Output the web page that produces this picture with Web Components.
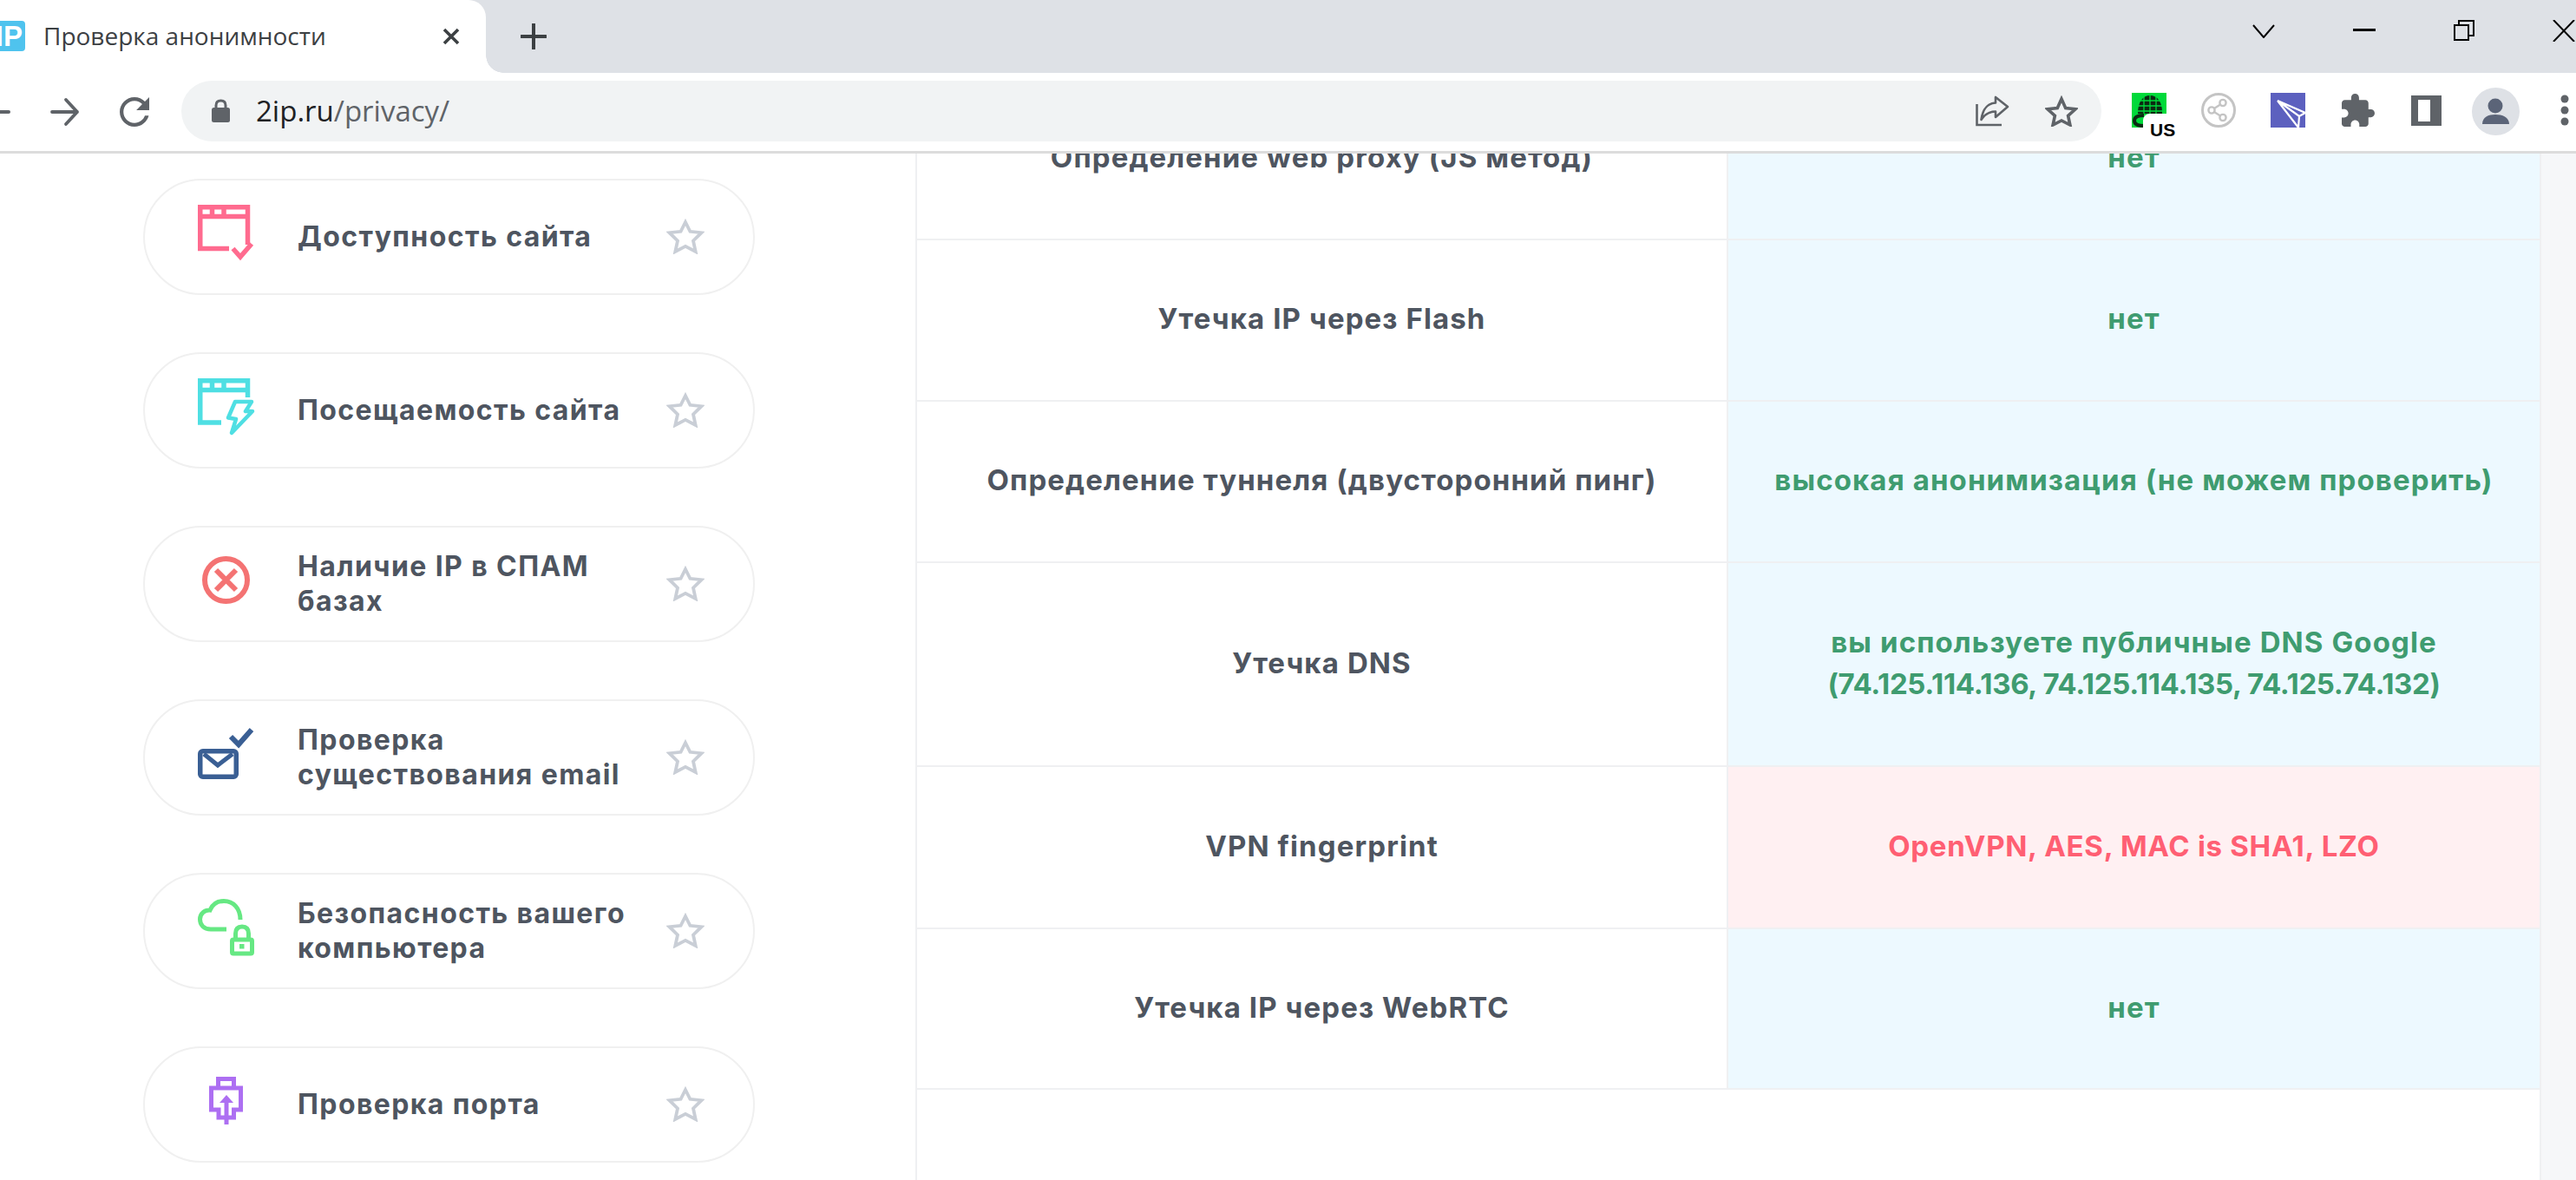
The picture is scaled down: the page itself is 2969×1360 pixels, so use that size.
<!DOCTYPE html>
<html lang="ru"><head><meta charset="utf-8"><title>Проверка анонимности</title>
<style>
html,body{margin:0;padding:0;background:#fff;overflow:hidden}
body{width:2969px;height:1360px;display:flex;flex-direction:column;font-family:"Open Sans","Liberation Sans",sans-serif}
</style></head><body>
<browser-tabstrip></browser-tabstrip>
<browser-toolbar></browser-toolbar>
<site-page>
  <site-menu slot="menu">
    <menu-card icon="avail">Доступность сайта</menu-card>
    <menu-card icon="traffic">Посещаемость сайта</menu-card>
    <menu-card icon="spam">Наличие IP в СПАМ базах</menu-card>
    <menu-card icon="mail">Проверка существования email</menu-card>
    <menu-card icon="secure">Безопасность вашего компьютера</menu-card>
    <menu-card icon="port">Проверка порта</menu-card>
  </site-menu>
  <check-table slot="table">
    <check-row h="186" name="Определение web proxy (JS метод)">нет</check-row>
    <check-row h="186" name="Утечка IP через Flash">нет</check-row>
    <check-row h="186" name="Определение туннеля (двусторонний пинг)">высокая анонимизация (не можем проверить)</check-row>
    <check-row h="235" name="Утечка DNS">вы используете публичные DNS Google<br><span style="letter-spacing:-.35px">(74.125.114.136, 74.125.114.135, 74.125.74.132)</span></check-row>
    <check-row h="187" bad name="VPN fingerprint"><span style="letter-spacing:.7px">OpenVPN, AES, MAC is SHA1, LZO</span></check-row>
    <check-row h="185" name="Утечка IP через WebRTC">нет</check-row>
  </check-table>
</site-page>
<script>
const def=(n,html,extra)=>customElements.define(n,class extends HTMLElement{
  connectedCallback(){ if(this.shadowRoot)return; const s=this.attachShadow({mode:'open'}); s.innerHTML=typeof html==='function'?html(this):html; }
});
def('browser-tabstrip',`<style>
:host{display:flex;height:84px;background:#dee1e6;flex:none;align-items:stretch;font-family:"Open Sans","Liberation Sans",sans-serif}
.tab{position:relative;width:560px;background:#fff;border-top-right-radius:20px;display:flex;align-items:center;box-sizing:border-box}
.tab::after{content:"";position:absolute;right:-20px;bottom:0;width:20px;height:20px;background:radial-gradient(circle at 100% 0,transparent 19.5px,#fff 20px)}
.fav{width:29px;height:35px;margin-top:-1px;background:#4fc3ee;border-radius:0 4px 4px 0;overflow:hidden;display:flex;justify-content:flex-end;align-items:center;color:#fff;font:700 33px/35px "Liberation Sans",sans-serif;flex:none}
.fav span{display:block;white-space:nowrap;margin-right:3px}
.title{margin-left:21px;font-size:28px;color:#3c4043;white-space:nowrap;margin-top:-2px}
.close{position:absolute;left:510px;top:32px}
.plus{margin-left:40px;align-self:flex-start;margin-top:27px}
.win{margin-left:auto;display:flex;gap:90px;margin-right:1px;align-self:flex-start;margin-top:23px;align-items:flex-start}
svg{display:block;flex:none}
</style>
<div class="tab"><div class="fav"><span>IP</span></div><div class="title">Проверка анонимности</div>
<svg class="close" width="20" height="20" viewBox="0 0 20 20"><path d="M2 2L18 18M18 2L2 18" stroke="#3c4043" stroke-width="3.6"/></svg></div>
<svg class="plus" width="30" height="30" viewBox="0 0 30 30"><path d="M15 1V29M1 15H29" stroke="#3c4043" stroke-width="4" stroke-linecap="round"/></svg>
<div class="win">
<svg style="margin-top:5px" width="26" height="16" viewBox="0 0 26 16"><path d="M1 1L13 15L25 1" fill="none" stroke="#000" stroke-width="2"/></svg>
<svg style="margin-top:10px" width="26" height="3" viewBox="0 0 26 3"><rect width="26" height="3"/></svg>
<svg width="24" height="24" viewBox="0 0 24 24" fill="none" stroke="#000" stroke-width="2"><rect x="1" y="6" width="16" height="17"/><path d="M6 6V1H23V18H17"/></svg>
<svg width="26" height="25" viewBox="0 0 26 25"><path d="M1 0L25 25M25 0L1 25" stroke="#000" stroke-width="2"/></svg>
</div>`);
def('browser-toolbar',`<style>
:host{display:flex;height:93px;box-sizing:border-box;border-bottom:3px solid #dcdcdc;background:#fff;flex:none;align-items:center;position:relative;z-index:2;font-family:"Open Sans","Liberation Sans",sans-serif}
svg{display:block;flex:none}
.addr{margin-left:37px;width:2213px;height:70px;margin-top:-3px;background:#f1f3f4;border-radius:35px;display:flex;align-items:center;box-sizing:border-box;padding:0 27px 0 35px}
.url{margin-left:30px;font-size:33px;color:#5f6368;white-space:nowrap}
.url b{font-weight:400;color:#202124}
.ext{position:relative;width:40px;height:40px;background:#00d93a;margin-left:35px;flex:none;margin-top:-4px}
.ext svg{position:absolute;left:0;top:0}
.badge{position:absolute;left:13px;top:24px;width:40px;height:30px;background:#fff;border-radius:8px 0 0 0;color:#000;font:700 21px/24px "Liberation Sans",sans-serif;padding:7px 0 0 8px;box-sizing:border-box}
</style>
<svg width="12" height="6" viewBox="0 0 12 6"><path d="M0 3H10" stroke="#5f6368" stroke-width="4" stroke-linecap="round"/></svg>
<svg style="margin-left:46px" width="34" height="34" viewBox="0 0 34 34"><path d="M2 17H31M18 3L31 17L18 31" fill="none" stroke="#5f6368" stroke-width="3.8" stroke-linecap="round" stroke-linejoin="round"/></svg>
<svg style="margin-left:46px" width="34" height="34" viewBox="4 4 16 16"><path fill="#5f6368" d="M17.65 6.35C16.2 4.9 14.21 4 12 4c-4.42 0-7.99 3.58-7.99 8s3.57 8 7.99 8c3.73 0 6.84-2.55 7.73-6h-2.08c-.82 2.33-3.04 4-5.65 4-3.31 0-6-2.69-6-6s2.69-6 6-6c1.66 0 3.14.69 4.22 1.78L13 11h7V4l-2.35 2.35z"/></svg>
<div class="addr">
<svg width="21" height="27" viewBox="0 0 21 27"><path d="M5 11V7.500C5 4 7 2 10.500 2S16 4 16 7.500V11" fill="none" stroke="#5f6368" stroke-width="3"/><rect y="10" width="21" height="17" rx="2.500" fill="#5f6368"/></svg>
<div class="url"><b>2ip.ru</b>/privacy/</div>
<svg style="margin-left:auto" width="39" height="36" viewBox="0 0 39 36" fill="none" stroke="#5f6368" stroke-width="2.600"><path d="M1.500 10V34H30"/><path d="M37 13L23 2V8.500C12 9.500 8 17 6.500 28C11 21 16 18.500 23 18.500V25Z" stroke-linejoin="round"/></svg>
<svg style="margin-left:41px" width="38" height="36" viewBox="0 0 38 36"><path d="M19 4L23.700 14.500L35 15.800L26.600 23.500L28.900 34L19 29L9.100 34L11.400 23.500L3 15.800L14.300 14.500Z" fill="none" stroke="#5f6368" stroke-width="3.600"/></svg>
</div>
<div class="ext">
<svg width="40" height="40" viewBox="0 0 40 40"><path d="M7 24C7 10 13 3 21 3S35 10 35 22V24Z" fill="#0b2a12"/><path d="M14 3V24M21 1V24M28 3V24M7 9H36M7 15H36M7 21H36" stroke="#00d93a" stroke-width="1.300"/><path d="M14 26C6 26 3 28 3 32S6 38 14 38" fill="none" stroke="#0b2a12" stroke-width="4"/></svg>
<div class="badge">US</div>
</div>
<svg style="margin-left:40px;margin-top:-4px" width="40" height="40" viewBox="0 0 40 40" fill="none" stroke="#c4c4c4"><circle cx="20" cy="20" r="18.500" stroke-width="3"/><circle cx="25" cy="11.500" r="3.600" stroke-width="2.400"/><circle cx="12" cy="20" r="3.600" stroke-width="2.400"/><circle cx="25" cy="28.500" r="3.600" stroke-width="2.400"/><path d="M15 18L22 13.500M15 22L22 26.500" stroke-width="2.400"/></svg>
<svg style="margin-left:40px;margin-top:-4px" width="40" height="40" viewBox="0 0 40 40"><rect width="40" height="40" fill="#5c60bf"/><path d="M8 9L40 23M8 9L32 40M8 9L33 27L40 23M33 27L32 40" fill="none" stroke="#fff" stroke-width="2.200"/></svg>
<svg style="margin-left:42px;margin-top:-4px" width="38" height="38" viewBox="2 1 21 21"><path fill="#5f6368" d="M20.500 11H19V7c0-1.100-.9-2-2-2h-4V3.500C13 2.120 11.880 1 10.500 1S8 2.120 8 3.500V5H4c-1.100 0-1.990.9-1.990 2v3.800H3.500c1.490 0 2.700 1.210 2.700 2.700s-1.210 2.700-2.700 2.700H2V20c0 1.100.9 2 2 2h3.800v-1.500c0-1.490 1.210-2.700 2.700-2.700 1.490 0 2.700 1.210 2.700 2.700V22H17c1.100 0 2-.9 2-2v-4h1.500c1.380 0 2.500-1.120 2.500-2.500S21.880 11 20.500 11z"/></svg>
<svg style="margin-left:42px;margin-top:-4px" width="35" height="35" viewBox="0 0 35 35"><rect width="35" height="35" fill="#5f6368"/><rect x="8" y="5" width="14" height="25" fill="#fff"/></svg>
<svg style="margin-left:35px;margin-top:-2px" width="55" height="55" viewBox="0 0 55 55"><circle cx="27.500" cy="27.500" r="27.500" fill="#dee1e6"/><circle cx="27" cy="21" r="8.500" fill="#5b6478"/><path d="M12 42C12 34 19 31 27 31S43 34 43 42Z" fill="#5b6478"/></svg>
<svg style="margin-left:47px;margin-top:-4px" width="10" height="36" viewBox="0 0 10 36"><g fill="#5f6368"><circle cx="5" cy="5" r="4.500"/><circle cx="5" cy="18" r="4.500"/><circle cx="5" cy="31" r="4.500"/></g></svg>`);
def('site-page',`<style>
:host{display:grid;grid-template-columns:1055px 1872px 1fr;height:1183px;overflow:hidden;background:#fff;flex:none}
.tbl{border-left:2px solid #eff0f2;box-sizing:border-box;min-width:0;overflow:hidden}
.rail{background:#f6f7f9;border-left:2px solid #eff0f2}
.menu{overflow:hidden}
</style>
<div class="menu"><slot name="menu"></slot></div><div class="tbl"><slot name="table"></slot></div><div class="rail"></div>`);
def('site-menu',`<style>:host{display:flex;flex-direction:column;gap:66px;padding:29px 0 0 165px;width:705px}</style><slot></slot>`);
const ICONS={
avail:`<g fill="none" stroke="#ff6b8f" stroke-width="5.500"><path d="M57.500 46V2.750H2.750V50.500H36"/><path d="M3 13.500H57"/><path d="M16.500 5V11M30 5V11"/></g><path d="M40.500 50.500L49 60L62 45" fill="none" stroke="#ff6b8f" stroke-width="5.500"/>`,
traffic:`<g fill="none" stroke="#4fdfe3" stroke-width="5.500"><path d="M57.500 22V2.750H2.750V51H27"/><path d="M3 13.500H57"/><path d="M16.500 5V11M30 5V11"/></g><path d="M43 27H62L55 38H63L39 63L44 47L35 45.500Z" fill="#fff" stroke="#4fdfe3" stroke-width="4.500" stroke-linejoin="round"/>`,
spam:`<circle cx="32.500" cy="32.500" r="24.500" fill="none" stroke="#f47373" stroke-width="6"/><path d="M21 21L44 44M44 21L21 44" stroke="#f47373" stroke-width="6"/>`,
mail:`<rect x="2.750" y="29.750" width="41.500" height="29.500" rx="3" fill="none" stroke="#3a5f94" stroke-width="5.500"/><path d="M7 33L23 46L40 33" fill="none" stroke="#3a5f94" stroke-width="5"/><path d="M38 13L47 22L62 5" fill="none" stroke="#3a5f94" stroke-width="6"/>`,
secure:`<path d="M33 35H15C7 35 2.500 30 2.500 23.500C2.500 17 8 12.500 14 13C17 6 22 2.500 30 2.500C41 2.500 49 11 49 24" fill="none" stroke="#66e883" stroke-width="5"/><rect x="39.500" y="47" width="23" height="16" rx="1.500" fill="none" stroke="#66e883" stroke-width="5"/><rect x="48" y="52" width="5.500" height="5.500" fill="#66e883"/><path d="M43.500 46V40C43.500 34 46.500 32 51 32S58.500 34 58.500 40V46" fill="none" stroke="#66e883" stroke-width="5"/>`,
port:`<g fill="none" stroke="#ad6ff2" stroke-width="5"><path d="M23.500 18V7.500H41.500V18"/><path d="M15.500 18H49.500V43H41.500V52H24V43H15.500Z"/><path d="M33 35V60"/></g><path d="M33 26L41 35H25Z" fill="#ad6ff2"/>`};
def('menu-card',el=>`<style>
:host{display:flex;align-items:center;height:134px;box-sizing:border-box;border:2px solid #f0f0f0;border-radius:67px;padding:0 56px 0 61px;color:#4e5560;font:700 32px/40px Inter,"Liberation Sans",sans-serif;letter-spacing:1.4px}
.ic{margin-bottom:8px;flex:none;display:block}
.t{margin-left:49px;width:395px;flex:none}
.s{margin-left:auto;flex:none;display:block;margin-top:-2px}
</style>
<svg class="ic" width="66" height="66" viewBox="0 0 66 66">${ICONS[el.getAttribute('icon')]}</svg>
<div class="t"><slot></slot></div>
<svg class="s" width="44" height="42" viewBox="0 0 44 42"><path d="M22 5L27.400 15.800L40.500 17.200L31 26.500L33.700 39L22 32.800L10.300 39L13 26.500L3.500 17.200L16.600 15.800Z" fill="none" stroke="#c9ced6" stroke-width="3.800"/></svg>`);
def('check-table',`<style>:host{display:block;margin-top:-86px}</style><slot></slot>`);
def('check-row',el=>`<style>
:host{display:grid;grid-template-columns:935px 935px;height:${el.getAttribute('h')}px;box-sizing:border-box;border-bottom:2px solid #eff0f2;font:700 33px/48px Inter,"Liberation Sans",sans-serif;letter-spacing:1.1px;text-align:center}
.a{display:flex;align-items:center;justify-content:center;border-right:2px solid #eff0f2;color:#4e5560;padding-bottom:4px;box-sizing:border-box}
.b{display:flex;align-items:center;justify-content:center;background:${el.hasAttribute('bad')?'#fff0f2':'#edf9ff'};color:${el.hasAttribute('bad')?'#ff5f73':'#3f9c70'};padding-bottom:4px;box-sizing:border-box}
</style><div class="a">${el.getAttribute('name')}</div><div class="b"><div><slot></slot></div></div>`);
</script>
</body></html>
